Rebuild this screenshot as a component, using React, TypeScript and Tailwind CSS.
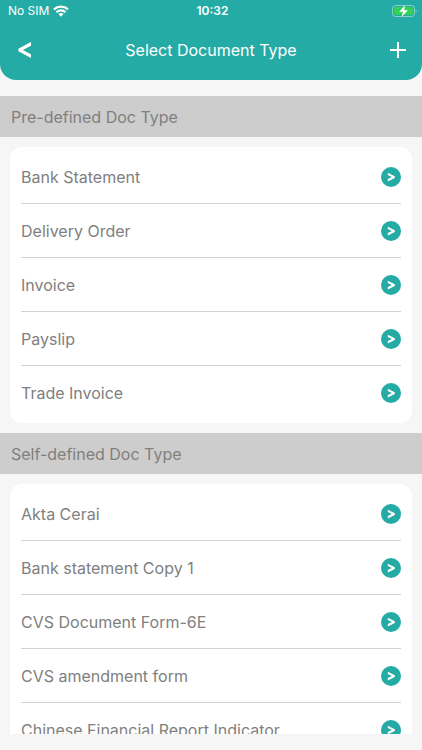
type DocSection = {
  title: string;
  items: string[];
};

const sections: DocSection[] = [
  {
    title: 'Pre-defined Doc Type',
    items: ['Bank Statement', 'Delivery Order', 'Invoice', 'Payslip', 'Trade Invoice'],
  },
  {
    title: 'Self-defined Doc Type',
    items: [
      'Akta Cerai',
      'Bank statement Copy 1',
      'CVS Document Form-6E',
      'CVS amendment form',
      'Chinese Financial Report Indicator',
    ],
  },
];

const WifiIcon = () => (
  <svg width="16" height="12" viewBox="0 0 16 12" fill="none" stroke="white" strokeWidth="2.2">
    <path d="M1 4.4a10.2 10.2 0 0 1 14 0" />
    <path d="M3.4 7.3a6.7 6.7 0 0 1 9.2 0" />
    <path d="M8 11.8 5.4 9.1a3.8 3.8 0 0 1 5.2 0z" fill="white" stroke="none" />
  </svg>
);

const BatteryIcon = () => (
  <svg width="25" height="12" viewBox="0 0 25 12" fill="none">
    <rect x="0.5" y="0.5" width="22" height="11" rx="3" stroke="white" strokeOpacity="0.45" />
    <rect x="2" y="2" width="19" height="8" rx="1.6" fill="#34d05c" />
    <path d="M23.6 4.2c1.2.5 1.2 3.1 0 3.6z" fill="white" fillOpacity="0.5" />
    <path d="M13 0.3 7.2 6.8h3.6L9.8 11.7 16 5.2h-3.8z" fill="white" />
  </svg>
);

const StatusBar = () => (
  <div className="grid grid-cols-3 items-center h-[22px] pl-2 pr-[5px] text-xs leading-none">
    <div className="flex items-center gap-1">
      <span>No SIM</span>
      <WifiIcon />
    </div>
    <span className="text-center font-semibold">10:32</span>
    <div className="flex justify-end">
      <BatteryIcon />
    </div>
  </div>
);

const Header = () => (
  <header className="flex-none pb-0.5 bg-[#25aba5] text-white rounded-b-2xl">
    <StatusBar />
    <div className="flex items-center justify-between h-14 px-4">
      <button aria-label="Back" className="w-4 h-6 flex items-center justify-center">
        <svg className="flex-none" width="16" height="16" viewBox="0 0 16 16">
          <path d="M15 0v3.8L6.8 8l8.2 4.2V16L2.4 9.3V6.7z" fill="white" />
        </svg>
      </button>
      <h1 className="text-base">Select Document Type</h1>
      <button aria-label="Add" className="w-4 h-6 flex items-center justify-center">
        <svg className="flex-none" width="18" height="18" viewBox="0 0 18 18" stroke="white" strokeWidth="2">
          <path d="M9 1v16M1 9h16" />
        </svg>
      </button>
    </div>
  </header>
);

const DocRow = ({ name }: { name: string }) => (
  <li className="border-b border-[#d2d2d2] last:border-transparent">
    <button className="flex items-center justify-between w-full h-[53px] text-left">
      <span>{name}</span>
      <svg className="flex-none" width="20" height="20" viewBox="0 0 20 20" fill="none">
        <circle cx="10" cy="10" r="10" fill="#25aba5" />
        <path d="M6.8 5.8v2.3l4.1 2-4.1 2v2.3l7-3.5V9.3z" fill="white" />
      </svg>
    </button>
  </li>
);

const App = () => {
  return (
    <div className="h-screen flex flex-col pb-4 bg-[#f6f6f6] font-['Inter',sans-serif] text-base text-[#808080]">
      <Header />
      <main className="flex-1 min-h-0 mt-4 overflow-y-auto [scrollbar-width:none]">
        {sections.map((section) => (
          <section key={section.title} className="pb-[10px]">
            <h2 className="flex items-center h-[41px] px-[11px] bg-[#cdcdcd]">{section.title}</h2>
            <ul className="mt-[10px] mx-[10px] px-[11px] py-[3px] bg-white rounded-xl">
              {section.items.map((item) => (
                <DocRow key={item} name={item} />
              ))}
            </ul>
          </section>
        ))}
      </main>
    </div>
  );
};

export default App;
